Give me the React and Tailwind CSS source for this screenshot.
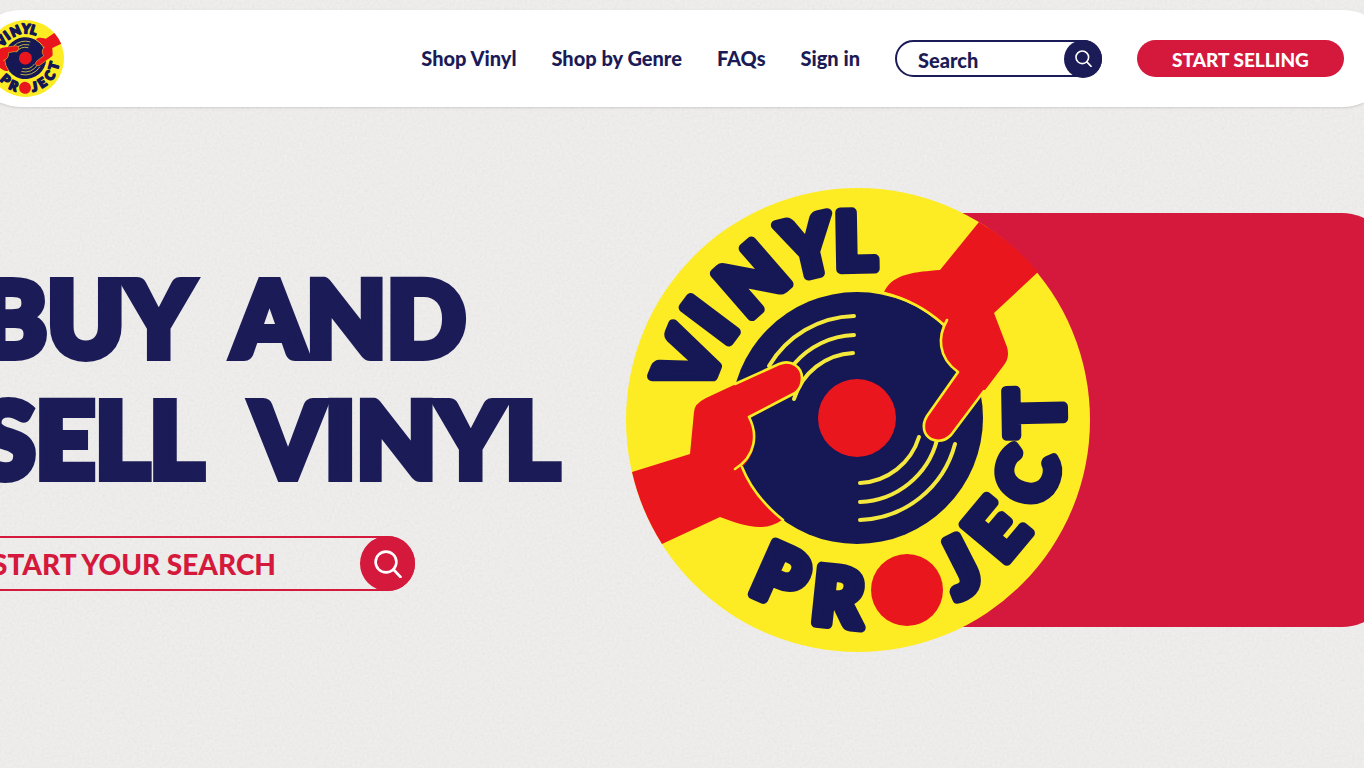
import React from "react";

const letters = [
  { ch: "V", x: 689, y: 361, r: -68 },
  { ch: "I", x: 710, y: 320, r: -53 },
  { ch: "N", x: 752, y: 279, r: -41 },
  { ch: "Y", x: 808, y: 247, r: -13 },
  { ch: "L", x: 855, y: 241, r: -1 },
  { ch: "P", x: 781, y: 576, r: 24 },
  { ch: "R", x: 838, y: 597, r: 6 },
  { ch: "J", x: 959, y: 567, r: -27 },
  { ch: "E", x: 996, y: 530, r: -50 },
  { ch: "C", x: 1027, y: 476, r: -72 },
  { ch: "T", x: 1035, y: 413, r: -91 },
];

function VinylLogo({ className }) {
  return (
    <svg viewBox="626 188 464 464" className={className} role="img" aria-label="Vinyl Project">
      <circle cx="858" cy="420" r="232" fill="#fdec23" />
      <circle cx="857" cy="418" r="126" fill="#161755" />
      {/* grooves */}
      <g fill="none" stroke="#f4e93c" strokeWidth="4" strokeLinecap="round">
        <path d="M769 366A102 102 0 0 1 854 316" />
        <path d="M794 364A83 83 0 0 1 854 335" />
        <path d="M794 399A65 65 0 0 1 853 353" />
        <path d="M860 483A65 65 0 0 0 919 437" />
        <path d="M860 502A83 83 0 0 0 937 440" />
        <path d="M860 520A102 102 0 0 0 955 444" />
      </g>
      <circle cx="857" cy="418" r="39" fill="#ea161d" />
      {/* right hand */}
      <path
        d="M979 222A232 232 0 0 1 1038 272L994 313L1007 347Q1010 357 1004 365L951 435Q942 444 931 439Q920 431 927 417L958 372C938 358 937 335 944 324Q917 300 884 292C893 273 916 272 940 270Z"
        fill="#ea161d"
      />
      <path
        d="M884 293Q917 301 943 324M947 320C938 336 937 357 958 372L927 416C921 426 924 435 931 439Q942 444 951 435L984 391"
        fill="none"
        stroke="#fdec23"
        strokeWidth="2.6"
        strokeLinecap="round"
        strokeLinejoin="round"
      />
      {/* left hand */}
      <path
        d="M632 472L690 454L694 412Q694 404 706 398L779 364C791 359 802 367 802 378Q802 388 795 393L749 417C757 434 757 454 742 467Q754 497 782 520C763 534 740 524 720 517L662 544A232 232 0 0 1 632 472Z"
        fill="#ea161d"
      />
      <path
        d="M735 384L779 364C791 359 802 367 802 378Q802 388 795 393L749 417C758 434 756 456 735 469M742 467Q754 497 783 520"
        fill="none"
        stroke="#fdec23"
        strokeWidth="2.6"
        strokeLinecap="round"
        strokeLinejoin="round"
      />
      <circle cx="907" cy="590" r="36" fill="#ea161d" />
      <g
        fill="#161755"
        stroke="#161755"
        strokeWidth="10"
        strokeLinejoin="round"
        fontFamily="Lato, sans-serif"
        fontWeight="900"
        fontSize="78"
        textAnchor="middle"
      >
        {letters.map((l) => (
          <text key={l.ch} transform={`translate(${l.x} ${l.y}) rotate(${l.r})`} y="28">
            {l.ch}
          </text>
        ))}
      </g>
    </svg>
  );
}

function SearchIcon({ className }) {
  return (
    <svg viewBox="0 0 28 28" className={className} fill="none" stroke="white" strokeWidth="2.6" strokeLinecap="round" aria-hidden="true">
      <circle cx="12" cy="12" r="10.4" />
      <path d="M19.5 19.5L26.5 27" />
    </svg>
  );
}

function PaperTexture() {
  return (
    <svg className="pointer-events-none absolute inset-0 -z-10 h-full w-full opacity-10" aria-hidden="true">
      <filter id="paper">
        <feTurbulence type="fractalNoise" baseFrequency="0.4" numOctaves="3" seed="4" />
        <feColorMatrix values="0.5 0.5 0 0 0.15  0.5 0.5 0 0 0.15  0.5 0.5 0 0 0.14  0 0 0 0 1" />
      </filter>
      <rect width="100%" height="100%" filter="url(#paper)" />
    </svg>
  );
}

const links = ["Shop Vinyl", "Shop by Genre", "FAQs", "Sign in"];

export default function App() {
  return (
    <div className="relative isolate min-h-screen overflow-hidden bg-[#f0efed] pt-2.5 font-['Lato',sans-serif] text-[#1b1b57]">
      <PaperTexture />
      <header className="-mx-7 flex items-center justify-between rounded-[49px] bg-white py-2.5 pr-12 pl-[15px] shadow-sm">
        <a href="#home" aria-label="Vinyl Project home">
          <VinylLogo className="size-[77px] rotate-[17deg]" />
        </a>
        <nav className="flex items-center gap-[35px] text-[20px] leading-6 font-black whitespace-nowrap">
          {links.map((l) => (
            <a key={l} href="#shop" className="pb-0.5">
              {l}
            </a>
          ))}
          <form className="flex h-[37px] w-[207px] items-center rounded-full border-2 border-current" onSubmit={(e) => e.preventDefault()}>
            <input
              type="text"
              aria-label="Search"
              placeholder="Search"
              className="min-w-0 flex-1 bg-transparent pt-0.5 pl-[21px] outline-none placeholder:text-[#1b1b57] placeholder:opacity-100"
            />
            <button type="submit" aria-label="Search" className="-m-0.5 flex size-[38px] shrink-0 items-center justify-center rounded-full bg-[#1b1b57]">
              <SearchIcon className="size-[17px]" />
            </button>
          </form>
          <button type="button" className="h-[37px] w-[207px] rounded-full bg-[#d4193c] pt-0.5 text-[19px] text-white">
            START SELLING
          </button>
        </nav>
      </header>

      <main className="-mx-7 mt-[81px] flex items-start">
        <section className="w-[654px] shrink-0 pt-[68px]">
          <h1 className="pl-1.5 text-[104px] leading-[121px] font-black whitespace-nowrap text-[#1b1b57] [-webkit-text-stroke:8px_#1b1b57]">
            <span className="flex gap-10">
              <span>BUY</span> <span>AND</span>
            </span>
            <span className="flex gap-12">
              <span>SELL</span> <span>VINYL</span>
            </span>
          </h1>
          <form className="mt-[38px] flex h-[55px] w-[443px] items-center rounded-full border-2 border-[#d4193c] text-[28px] font-black text-[#d4193c]" onSubmit={(e) => e.preventDefault()}>
            <input
              type="text"
              aria-label="Start your search"
              placeholder="START YOUR SEARCH"
              className="min-w-0 flex-1 bg-transparent pl-[18px] outline-none placeholder:text-[#d4193c] placeholder:opacity-100"
            />
            <button type="submit" aria-label="Start your search" className="-m-0.5 flex size-[55px] shrink-0 items-center justify-center rounded-full bg-[#d4193c]">
              <SearchIcon className="size-7" />
            </button>
          </form>
        </section>
        <VinylLogo className="z-10 size-[464px] shrink-0" />
        <div className="mt-[25px] -ml-[232px] h-[414px] flex-1 rounded-r-[50px] bg-[#d4193c]" />
      </main>
    </div>
  );
}
